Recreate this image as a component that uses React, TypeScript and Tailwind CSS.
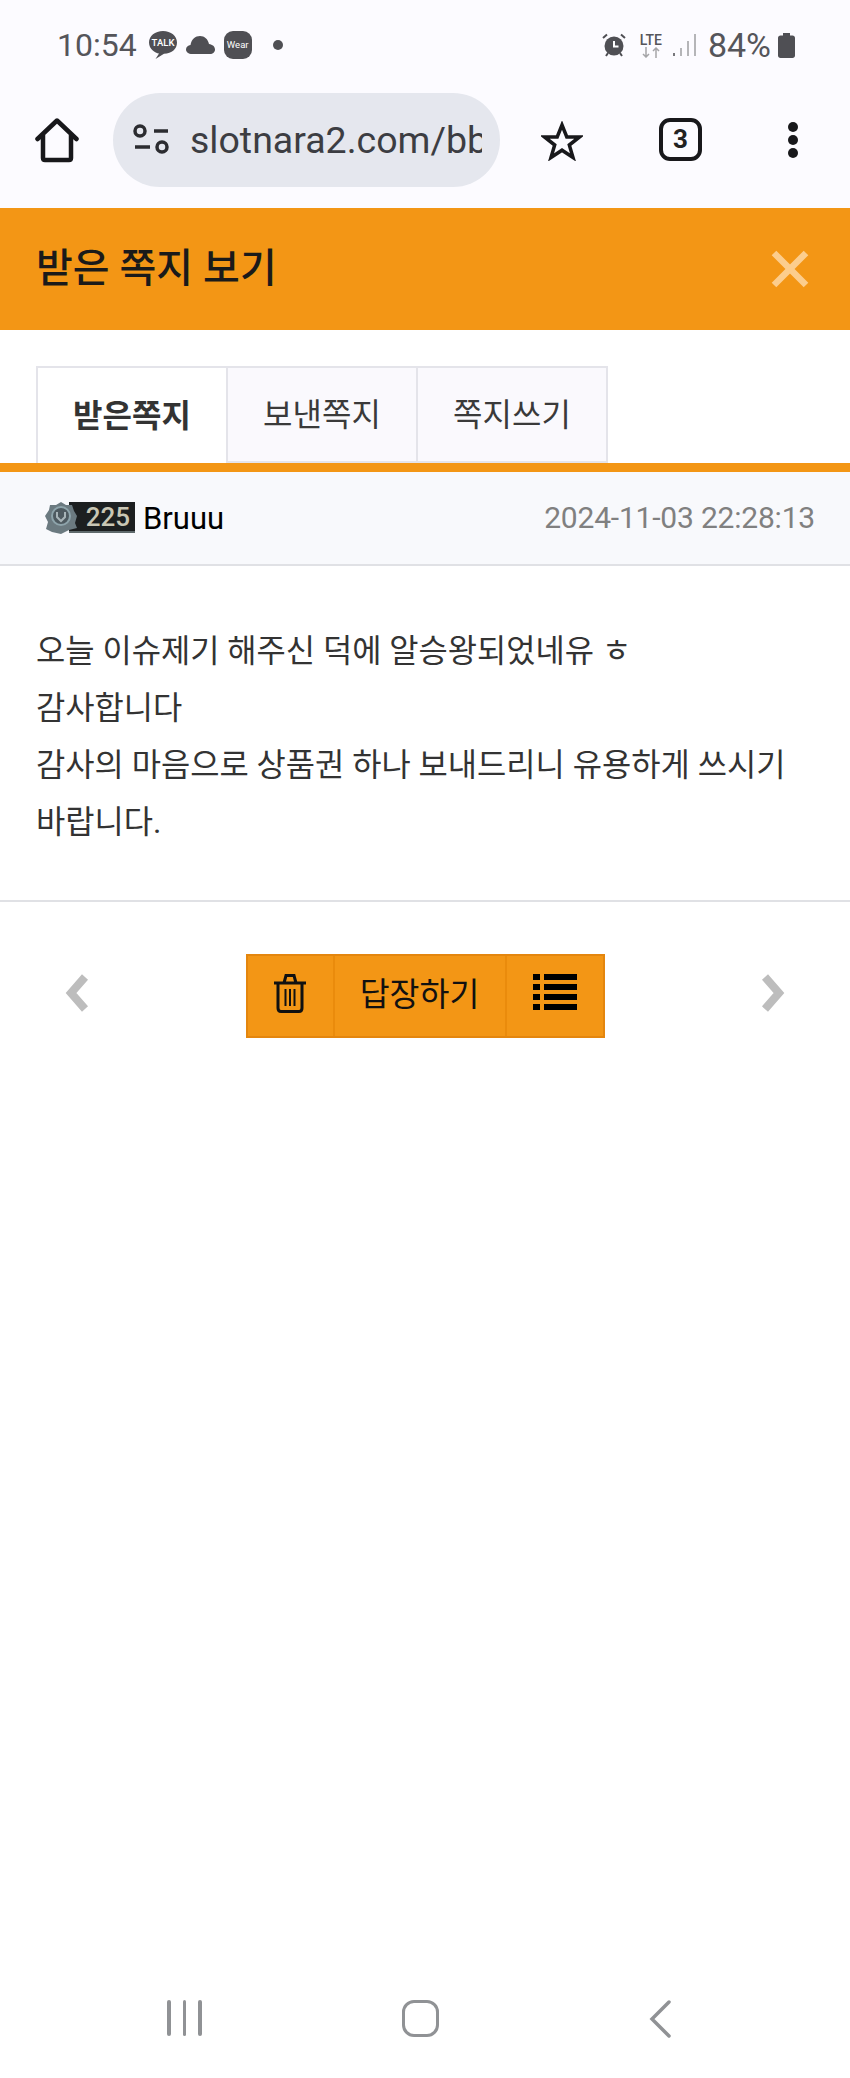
import React from "react";

const font = "font-['Roboto','Noto_Sans_CJK_KR',sans-serif]";

const StatusIcons = () => (
  <div className="flex items-center">
    <svg width="30" height="30" viewBox="0 0 30 30" className="ml-[11px]">
      <path d="M15 1C7 1 1 6 1 12.500C1 19 7 23 11 23.500L7.500 29L16 23.800C24 23.500 29 19 29 12.500C29 6 23 1 15 1Z" fill="#4f4f54" />
      <text x="15" y="16" textAnchor="middle" fontSize="9.500" fontFamily="Roboto, sans-serif" fontWeight="500" fill="#fff">TALK</text>
    </svg>
    <svg width="29" height="20" viewBox="0 0 29 20" className="ml-[8px]">
      <path d="M6 19C2.500 19 0 17 0 14.500C0 12 2 10.500 4.500 10C5.500 4 9.500 1 14 1C18.500 1 22 4 23 9C26.500 9.500 29 11.500 29 14.500C29 17 27 19 24 19Z" fill="#4f4f54" />
    </svg>
    <div className="ml-[9px] w-[28px] h-[28px] rounded-[9px] bg-[#4f4f54] text-white text-[9.500px] flex items-center justify-center">Wear</div>
    <span className="ml-[21px] w-[10px] h-[10px] rounded-full bg-[#4f4f54]" />
  </div>
);

const StatusRight = () => (
  <div className="flex items-center">
    <svg width="24" height="24" viewBox="0 0 24 24">
      <circle cx="12" cy="13" r="9.500" fill="#4f4f54" />
      <path d="M12 8V13.500H16.500" fill="none" stroke="#fff" strokeWidth="2" />
      <path d="M1 5L5 1.500M23 5L19 1.500M4 23L6 20M20 23L18 20" stroke="#4f4f54" strokeWidth="2" />
    </svg>
    <div className="ml-[12px] w-[26px] flex flex-col items-center">
      <span className="text-[14px] leading-[14px] font-medium text-[#55555a]">LTE</span>
      <svg width="20" height="11" viewBox="0 0 20 11">
        <path d="M5 0V10M2 7L5 10L8 7" fill="none" stroke="#a5a5a8" strokeWidth="1.500" />
        <path d="M15 11V1M12 4L15 1L18 4" fill="none" stroke="#a5a5a8" strokeWidth="1.500" />
      </svg>
    </div>
    <svg width="23" height="24" viewBox="0 0 23 24" className="ml-[9px]">
      <rect x="0" y="20" width="2" height="3" fill="#77777b" />
      <rect x="7" y="15" width="2" height="8" fill="#b5b5b8" />
      <rect x="14" y="8" width="2" height="15" fill="#b5b5b8" />
      <rect x="21" y="1" width="2" height="22" fill="#b5b5b8" />
    </svg>
    <span className="ml-[12px] text-[34px] leading-none text-[#55555a]">84%</span>
    <svg width="17" height="25" viewBox="0 0 17 25" className="ml-[7px]">
      <path d="M5 0H12V2.500H14.500C16 2.500 17 3.500 17 5V22.500C17 24 16 25 14.500 25H2.500C1 25 0 24 0 22.500V5C0 3.500 1 2.500 2.500 2.500H5Z" fill="#4f4f54" />
    </svg>
  </div>
);

const App = () => {
  return (
    <div className={`w-[850px] h-[2078px] bg-white flex flex-col ${font}`}>
      {/* Status bar */}
      <div className="h-[90px] bg-[#fcfbff] flex items-center pl-[57px] pr-[55px] justify-between">
        <div className="flex items-center">
          <span className="text-[32px] leading-none text-[#55555a]">10:54</span>
          <StatusIcons />
        </div>
        <StatusRight />
      </div>

      {/* Browser bar */}
      <div className="h-[118px] bg-[#fcfbff] flex items-start pt-[3px] pl-[35px]">
        <svg width="44" height="46" viewBox="0 0 44 46" className="mt-[24px]">
          <path d="M2.500 22L22 3.500L41.500 22M8 17V41C8 42.500 8.500 43 10 43H34C35.500 43 36 42.500 36 41V17" fill="none" stroke="#18181b" strokeWidth="4.500" strokeLinejoin="round" strokeLinecap="round" />
        </svg>
        <div className="ml-[34px] w-[387px] h-[94px] rounded-full bg-[#e5e7ee] flex items-center pl-[20px] shrink-0">
          <svg width="36" height="32" viewBox="0 0 36 32">
            <circle cx="7" cy="7" r="5" fill="none" stroke="#2b2c30" strokeWidth="3.500" />
            <path d="M21 7H35M2 23H17" stroke="#2b2c30" strokeWidth="3.500" />
            <circle cx="29" cy="23" r="5" fill="none" stroke="#2b2c30" strokeWidth="3.500" />
          </svg>
          <div className="ml-[21px] w-[292px] overflow-hidden">
            <span className="text-[37.500px] text-[#3c3d42] whitespace-nowrap">slotnara2.com/bb</span>
          </div>
        </div>
        <svg width="42" height="40" viewBox="0 0 42 40" className="ml-[41px] mt-[28px]">
          <path d="M21 4L25.800 16H38.500L28.300 24L32 36.500L21 29.200L10 36.500L13.700 24L3.500 16H16.200Z" fill="none" stroke="#18181b" strokeWidth="3.500" strokeLinejoin="miter" />
        </svg>
        <div className="ml-[76px] mt-[25px] w-[43px] h-[43px] border-[4px] border-[#18181b] rounded-[11px] flex items-center justify-center font-bold text-[26px] text-[#222]">3</div>
        <div className="ml-[86px] mt-[29px] flex flex-col gap-[3px]">
          <span className="w-[10px] h-[10px] rounded-full bg-[#18181b]" />
          <span className="w-[10px] h-[10px] rounded-full bg-[#18181b]" />
          <span className="w-[10px] h-[10px] rounded-full bg-[#18181b]" />
        </div>
      </div>

      {/* Title */}
      <div className="h-[122px] bg-[#f39615] flex items-center justify-between pl-[36px] pr-[41px]">
        <span className="text-[40px] font-medium text-[#1a1a1a]">받은 쪽지 보기</span>
        <svg width="38" height="38" viewBox="0 0 38 38">
          <path d="M3 3L35 35M35 3L3 35" stroke="#fccd8d" strokeWidth="6.500" />
        </svg>
      </div>

      {/* Tabs */}
      <div className="h-[142px] pl-[36px] flex items-end border-b-[9px] border-[#f39615]">
        <div className="w-[192px] h-[97px] border-2 border-b-0 border-[#e4e4ea] flex items-center justify-center text-[32px] font-bold text-[#333]">받은쪽지</div>
        <div className="w-[190px] h-[97px] border-2 border-l-0 border-[#e4e4ea] bg-[#faf9fd] flex items-center justify-center text-[32px] text-[#3a3a3a]">보낸쪽지</div>
        <div className="w-[190px] h-[97px] border-2 border-l-0 border-[#e4e4ea] bg-[#faf9fd] flex items-center justify-center text-[32px] text-[#3a3a3a]">쪽지쓰기</div>
      </div>

      {/* Sender */}
      <div className="h-[94px] bg-[#f8f9fc] border-b-2 border-[#e0e1e5] flex items-center justify-between pl-[45px] pr-[35px]">
        <div className="flex items-center">
          <div className="relative w-[90px] h-[32px] flex justify-end">
            <div className="w-[66px] h-[31px] bg-[#1c1f20] border-b-2 border-[#5f6a6c] flex items-center justify-end pr-[5px] text-[26px] font-medium leading-none text-[#c9c6b4]">225</div>
            <svg width="32" height="32" viewBox="0 0 32 32" className="absolute left-0 top-0">
              <path d="M16 0L21 3L27 3L29 9L32 14L30 21L32 26L24 28L16 32L7 30L1 27L3 20L0 14L4 8L5 3L11 3Z" fill="#6b7a80" />
              <circle cx="16" cy="14" r="9" fill="#4e5a60" stroke="#8ea4ab" strokeWidth="2" />
              <path d="M12 10V15L16 19L20 15V10" fill="none" stroke="#a8b4b8" strokeWidth="2" />
            </svg>
          </div>
          <span className="ml-[8px] text-[31px] leading-none text-black">Bruuu</span>
        </div>
        <span className="text-[30px] leading-none tracking-[-0.2px] text-[#808080]">2024-11-03 22:28:13</span>
      </div>

      {/* Message */}
      <div className="h-[336px] border-b-2 border-[#e0e1e5] px-[36px] pt-[57px] text-[31.800px] leading-[57px] text-[#333]">
        <p>오늘 이슈제기 해주신 덕에 알승왕되었네유 ㅎ</p>
        <p>감사합니다</p>
        <p>감사의 마음으로 상품권 하나 보내드리니 유용하게 쓰시기</p>
        <p>바랍니다.</p>
      </div>

      {/* Actions */}
      <div className="mt-[52px] px-[65px] flex items-center justify-between">
        <svg width="25" height="38" viewBox="0 0 25 38" className="mt-[-6px]">
          <path d="M20 3L6 19L20 35" fill="none" stroke="#bdbdbd" strokeWidth="8" />
        </svg>
        <div className="flex h-[84px] border-2 border-[#e4860e] bg-[#f39615]">
          <div className="w-[87px] flex items-center justify-center border-r-2 border-[#ea8b0c]">
            <svg width="34" height="40" viewBox="0 0 34 40" className="mt-[-6px]">
              <path d="M1 10H33M11 10L13 2.500H21L23 10" fill="none" stroke="#111" strokeWidth="3" />
              <path d="M5 10V35C5 37 6 38.500 8 38.500H26C28 38.500 29 37 29 35V10" fill="none" stroke="#111" strokeWidth="3" />
              <path d="M12.500 16V33M17 16V33M21.500 16V33" stroke="#111" strokeWidth="2" />
            </svg>
          </div>
          <div className="w-[172px] flex items-center justify-center border-r-2 border-[#ea8b0c] text-[32.500px] text-[#111] pb-[2px]">답장하기</div>
          <div className="w-[96px] flex items-center justify-center">
            <svg width="44" height="36" viewBox="0 0 44 36" className="mt-[-8px]">
              <path d="M0 0H7V6H0ZM11 0H44V6H11ZM0 10H7V16H0ZM11 10H44V16H11ZM0 20H7V26H0ZM11 20H44V26H11ZM0 30H7V36H0ZM11 30H44V36H11Z" fill="#000" />
            </svg>
          </div>
        </div>
        <svg width="25" height="38" viewBox="0 0 25 38" className="mt-[-6px]">
          <path d="M5 3L19 19L5 35" fill="none" stroke="#bdbdbd" strokeWidth="8" />
        </svg>
      </div>

      {/* Android nav */}
      <div className="mt-auto h-[78px] flex items-start pl-[167px]">
        <div className="flex gap-[12px]">
          <span className="w-[3.500px] h-[36px] rounded-full bg-[#909295]" />
          <span className="w-[3.500px] h-[36px] rounded-full bg-[#909295]" />
          <span className="w-[3.500px] h-[36px] rounded-full bg-[#909295]" />
        </div>
        <span className="ml-[200px] w-[37px] h-[37px] border-[3.500px] border-[#909295] rounded-[12px]" />
        <svg width="22" height="38" viewBox="0 0 22 38" className="ml-[210px]">
          <path d="M20 2L3 19L20 36" fill="none" stroke="#909295" strokeWidth="3.500" strokeLinecap="round" />
        </svg>
      </div>
    </div>
  );
};

export default App;
